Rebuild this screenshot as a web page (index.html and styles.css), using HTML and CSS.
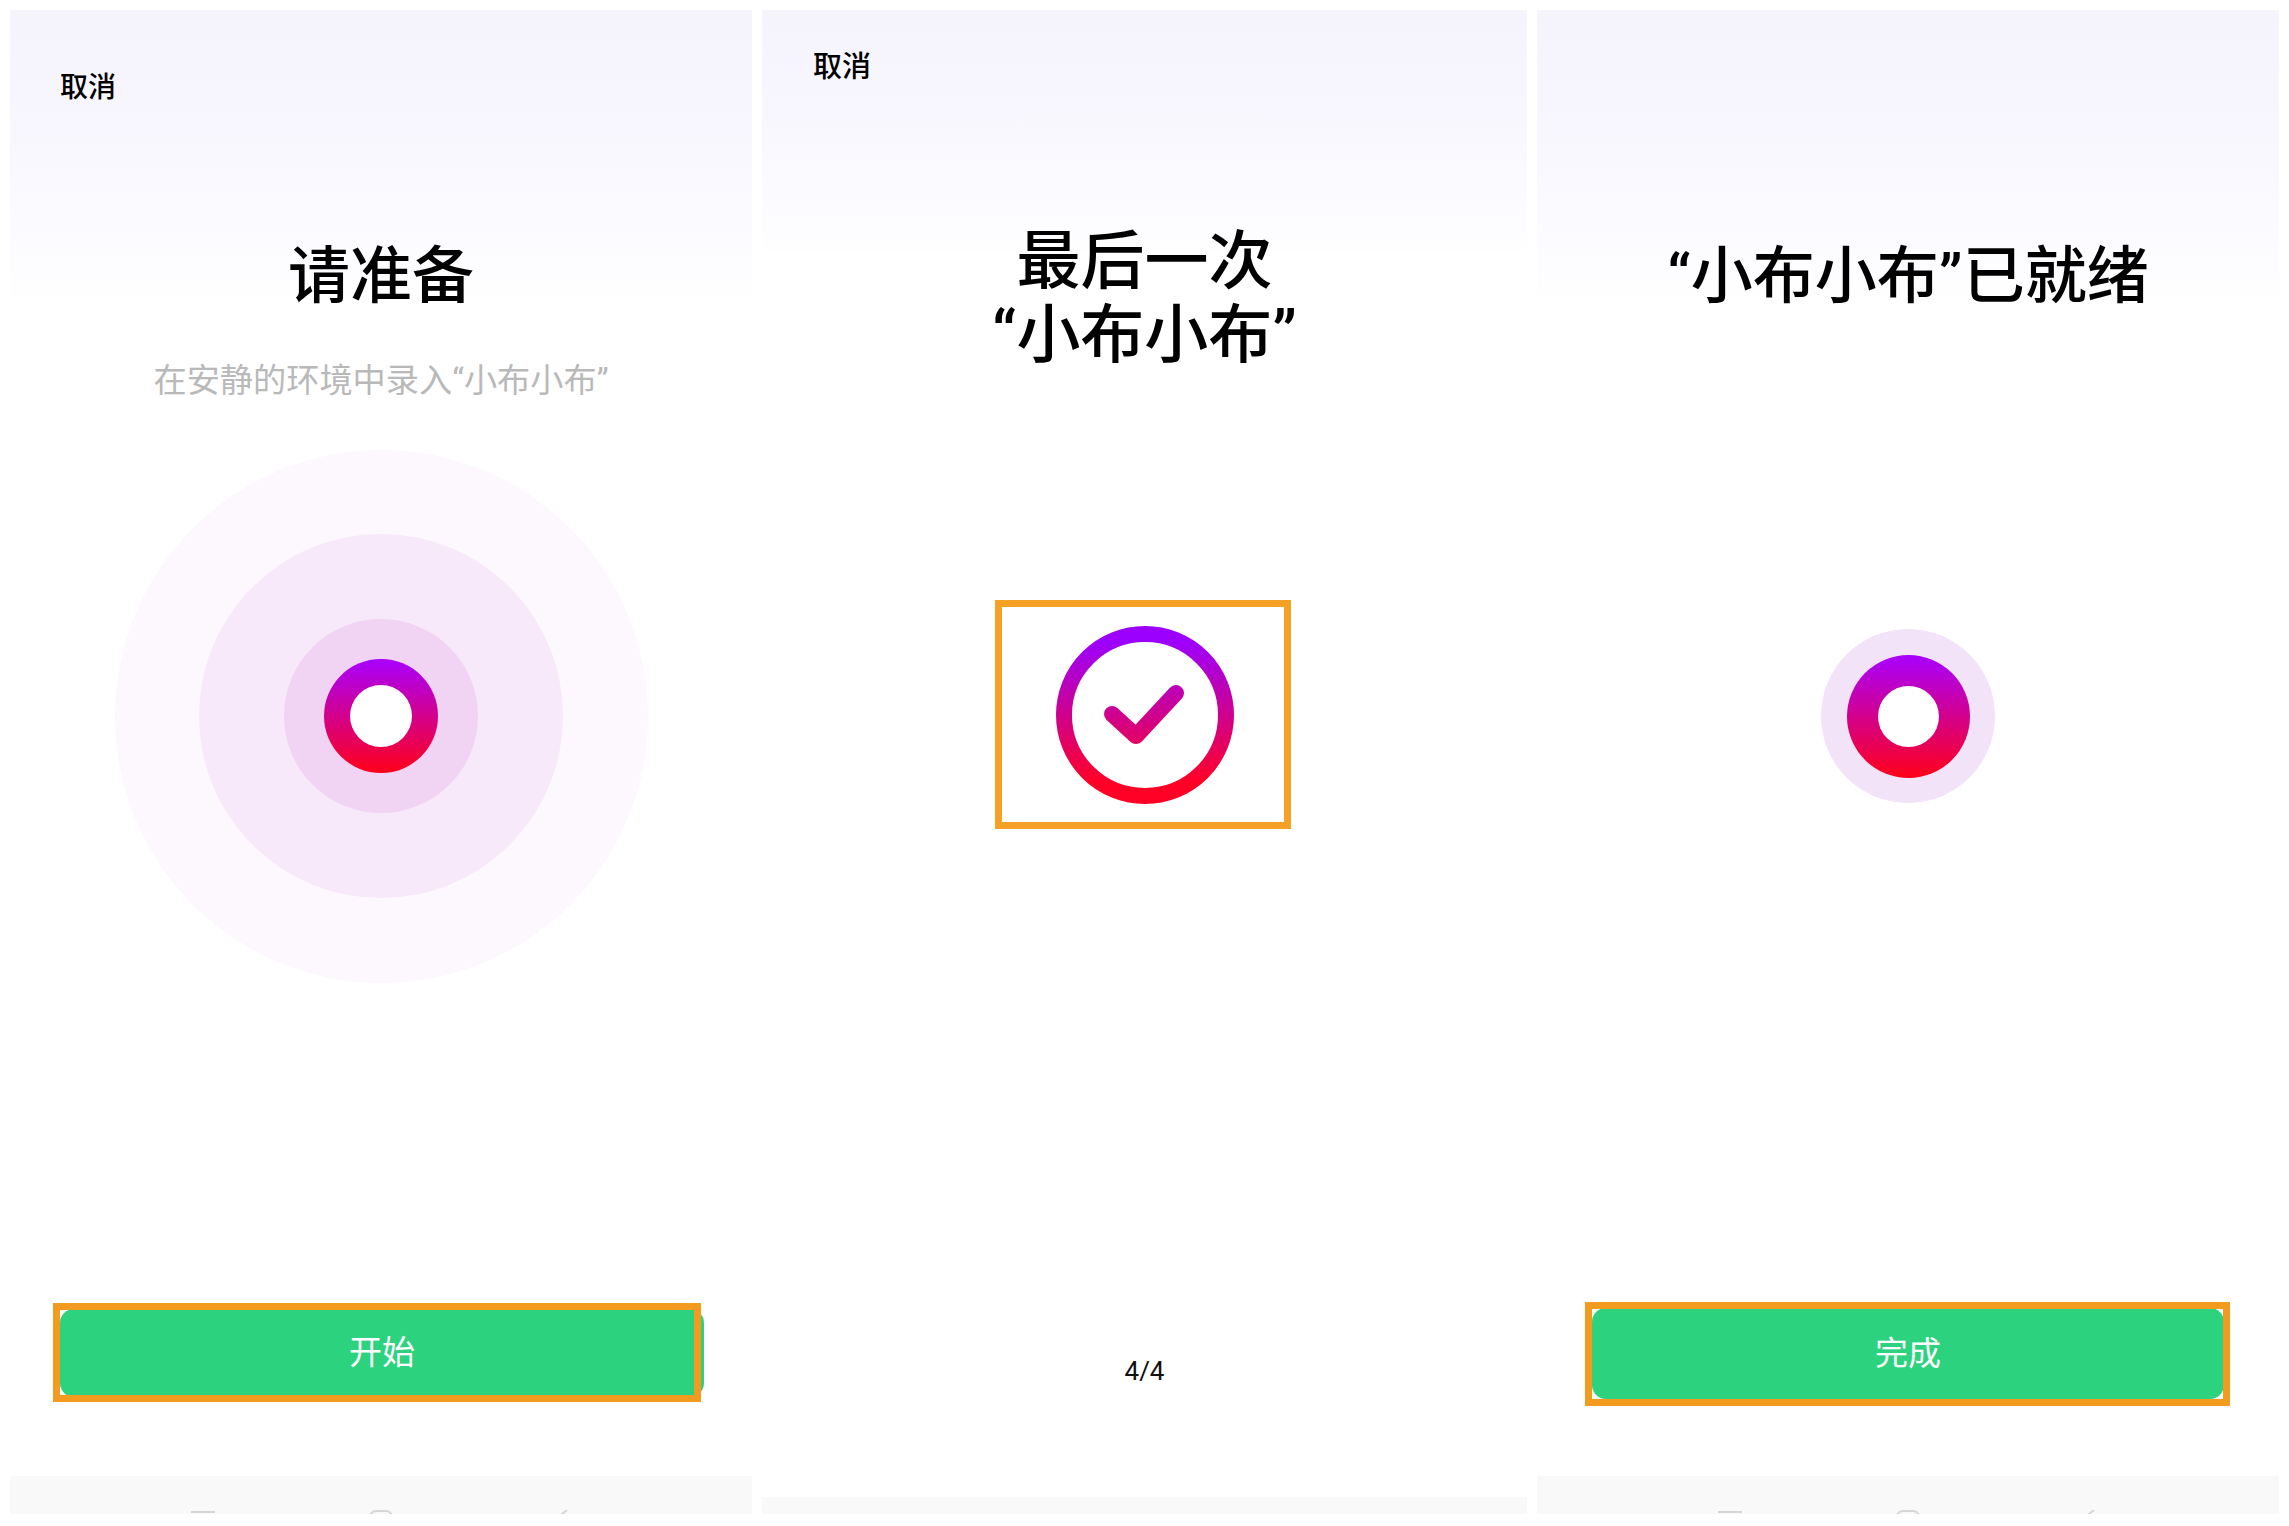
FILE: index.html
```html
<!DOCTYPE html>
<html lang="zh-CN">
<head>
    <meta charset="UTF-8">
    <meta name="viewport" content="width=device-width, initial-scale=1.0">
    <title>小布小布</title>
    <link rel="stylesheet" href="styles.css">
</head>
<body>
    <section class="panel panel-start">
        <div class="cancel">取消</div>
        <h1 class="title">请准备</h1>
        <p class="sub">在安静的环境中录入“小布小布”</p>
        <div class="rings">
            <div class="ring-mid">
                <div class="ring-inner">
                    <div class="dot"></div>
                </div>
            </div>
        </div>
        <div class="btn-wrap">
            <button class="btn">开始</button>
            <span class="mark"></span>
        </div>
        <div class="navbar">
            <svg width="24" height="24" viewBox="0 0 24 24"><path d="M0 2H25" class="nav-line"/></svg>
            <svg width="24" height="24" viewBox="0 0 24 24"><rect x="1" y="1" width="22" height="22" rx="6" class="nav-line"/></svg>
            <svg width="24" height="24" viewBox="0 0 24 24"><path d="M20 0L5 12L20 24" class="nav-line"/></svg>
        </div>
    </section>

    <section class="panel panel-check">
        <div class="cancel">取消</div>
        <h1 class="title">最后一次<br>“小布小布”</h1>
        <div class="check-box">
            <svg width="178" height="178" viewBox="0 0 178 178">
                <defs>
                    <linearGradient id="grad" gradientUnits="userSpaceOnUse" x1="0" y1="0" x2="0" y2="178">
                        <stop offset="0.08" stop-color="#9b00ff"/>
                        <stop offset="0.88" stop-color="#ff0026"/>
                    </linearGradient>
                </defs>
                <circle cx="89" cy="89" r="81" fill="none" stroke="url(#grad)" stroke-width="16"/>
                <path d="M56 88L80 110L120 67" fill="none" stroke="url(#grad)" stroke-width="16" stroke-linecap="round" stroke-linejoin="round"/>
            </svg>
        </div>
        <div class="count">4/4</div>
        <div class="navbar navbar-short"></div>
    </section>

    <section class="panel panel-done">
        <h1 class="title">“小布小布”已就绪</h1>
        <div class="halo">
            <div class="dot dot-big"></div>
        </div>
        <div class="btn-wrap">
            <button class="btn">完成</button>
            <span class="mark"></span>
        </div>
        <div class="navbar">
            <svg width="24" height="24" viewBox="0 0 24 24"><path d="M0 2H25" class="nav-line"/></svg>
            <svg width="24" height="24" viewBox="0 0 24 24"><rect x="1" y="1" width="22" height="22" rx="6" class="nav-line"/></svg>
            <svg width="24" height="24" viewBox="0 0 24 24"><path d="M20 0L5 12L20 24" class="nav-line"/></svg>
        </div>
    </section>
</body>
</html>
```

FILE: styles.css
```css
body{
    margin: 0;
    padding: 10px 10px 12px;
    height: 1526px;
    box-sizing: border-box;
    display: flex;
    gap: 10px;
    overflow: hidden;
    background-color: white;
    font-family: Roboto, "Noto Sans CJK SC", sans-serif;
    color: black;
}
.panel{
    width: 742px;
    display: flex;
    flex-direction: column;
    background: linear-gradient(#f5f4fd, #f8f7fe 45%, #fcfbff 80%, #fefeff) no-repeat;
    background-size: 100% 285px;
}
.panel-check{
    width: 765px;
    background-size: 100% 240px;
}
.cancel{
    font-size: 28px;
    font-weight: 500;
    line-height: 40px;
    margin: 58px 0 0 50px;
}
.panel-check .cancel{
    font-size: 29px;
    margin: 37px 0 0 51px;
}
.title{
    margin: 132px 0 0;
    font-size: 62px;
    font-weight: 500;
    line-height: 74px;
    text-align: center;
}
.panel-check .title{
    margin-top: 138px;
    font-size: 64px;
}
.panel-done .title{
    margin-top: 230px;
}
.sub{
    margin: 43px 0 0;
    font-size: 33.2px;
    line-height: 48px;
    text-align: center;
    color: #b9b9b9;
}
.rings, .ring-mid, .ring-inner, .halo{
    display: flex;
    align-items: center;
    justify-content: center;
    border-radius: 50%;
    align-self: center;
}
.rings{
    width: 533px;
    height: 533px;
    margin-top: 44.5px;
    background-color: #fdf8fd;
}
.ring-mid{
    width: 364px;
    height: 364px;
    background-color: #f7e9f9;
}
.ring-inner{
    width: 194px;
    height: 194px;
    background-color: #f1d3f3;
}
.halo{
    width: 174px;
    height: 174px;
    margin-top: 315px;
    background-color: #f3e3f9;
}
.dot{
    width: 62px;
    height: 62px;
    border: 26.5px solid transparent;
    border-radius: 50%;
    background: linear-gradient(white, white) padding-box, linear-gradient(#a800ff, #ff0019) border-box;
}
.dot-big{
    width: 61px;
    height: 61px;
    border-width: 31.5px;
}
.btn-wrap{
    position: relative;
    margin: auto 0 79px 50px;
    width: 644px;
    height: 88px;
}
.btn{
    display: block;
    width: 100%;
    height: 100%;
    border: none;
    border-radius: 14px;
    background-color: #2dd27f;
    color: white;
    font: inherit;
    font-size: 33px;
    padding: 0 0 6px;
}
.mark{
    position: absolute;
    top: -6px;
    left: -7px;
    right: 3px;
    bottom: -5px;
    border: 7px solid #f29b1f;
}
.panel-done .btn-wrap{
    margin: auto 0 77px 55px;
    width: 632px;
    height: 91px;
}
.panel-done .mark{
    left: -7px;
    right: -6px;
    bottom: -7px;
}
.navbar{
    height: 38px;
    padding-top: 34px;
    box-sizing: border-box;
    overflow: hidden;
    background-color: #f9f9f9;
    display: flex;
    justify-content: center;
    gap: 154px;
    flex-shrink: 0;
}
.navbar-short{
    height: 17px;
    padding: 0;
}
.nav-line{
    fill: none;
    stroke: #d6d6d6;
    stroke-width: 2;
}
.check-box{
    align-self: center;
    margin: 227px 3px 0 0;
    width: 296px;
    height: 229px;
    padding-left: 3px;
    box-sizing: border-box;
    border: 7px solid #f4a126;
    display: flex;
    align-items: center;
    justify-content: center;
}
.count{
    margin-top: auto;
    margin-bottom: 111px;
    font-size: 26px;
    line-height: 30px;
    text-align: center;
    color: #111;
}
```
